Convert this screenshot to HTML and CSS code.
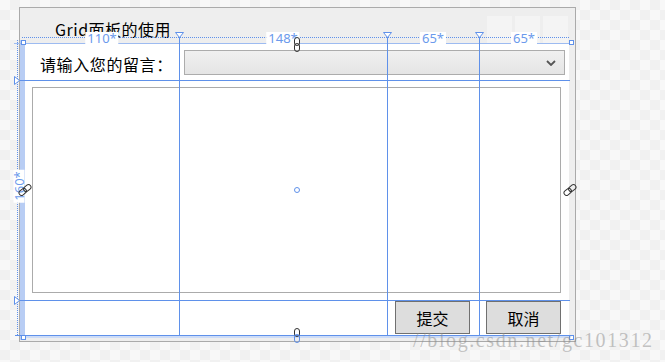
FILE: index.html
```html
<!DOCTYPE html>
<html lang="zh-cn">
<head>
    <meta charset="UTF-8">
    <meta name="viewport" content="width=device-width, initial-scale=1.0">
    <title>Grid面板的使用</title>
    <link rel="stylesheet" href="styles.css">
</head>
<body>
    <div class="stage">
        <div class="window">
            <div class="titlebar">
                <span class="title">Grid面板的使用</span>
                <div class="win-buttons">
                    <span></span><span></span><span></span>
                </div>
            </div>

            <div class="client">
                <div class="msg-label">请输入您的留言：</div>
                <div class="combo">
                    <svg class="chevron" width="10" height="6" viewBox="0 0 10 6"><path d="M1 1 L5 5 L9 1" fill="none" stroke="#555" stroke-width="1.8"/></svg>
                </div>
                <div class="memo"></div>
                <button class="btn btn-submit">提交</button>
                <button class="btn btn-cancel">取消</button>
            </div>

            <!-- designer adorners -->
            <div class="ruler-top"></div>
            <div class="ruler-left"></div>
            <div class="band-left"></div>
            <div class="band-bottom"></div>

            <div class="gline row-line r0"></div>
            <div class="gline row-line r1"></div>
            <div class="gline row-line r2"></div>
            <div class="gline row-line r3"></div>
            <div class="gline col-line c1"></div>
            <div class="gline col-line c2"></div>
            <div class="gline col-line c3"></div>

            <svg class="marker m-c1" width="9" height="6" viewBox="0 0 9 6"><path d="M0.5 0.5 H8.5 L4.5 5.5 Z" fill="#fff" stroke="#5f91ea"/></svg>
            <svg class="marker m-c2" width="9" height="6" viewBox="0 0 9 6"><path d="M0.5 0.5 H8.5 L4.5 5.5 Z" fill="#fff" stroke="#5f91ea"/></svg>
            <svg class="marker m-c3" width="9" height="6" viewBox="0 0 9 6"><path d="M0.5 0.5 H8.5 L4.5 5.5 Z" fill="#fff" stroke="#5f91ea"/></svg>
            <svg class="marker m-r1" width="6" height="9" viewBox="0 0 6 9"><path d="M0.5 0.5 V8.5 L5.5 4.5 Z" fill="#fff" stroke="#5f91ea"/></svg>
            <svg class="marker m-r2" width="6" height="9" viewBox="0 0 6 9"><path d="M0.5 0.5 V8.5 L5.5 4.5 Z" fill="#fff" stroke="#5f91ea"/></svg>

            <span class="corner k-tl"></span>
            <span class="corner k-tr"></span>
            <span class="corner k-bl"></span>
            <span class="corner k-br"></span>

            <span class="col-tag t1">110*</span>
            <span class="col-tag t2">148*</span>
            <span class="col-tag t3">65*</span>
            <span class="col-tag t4">65*</span>
            <span class="row-tag">160*</span>

            <svg class="link l-top" width="6" height="15" viewBox="0 0 6 15"><rect x="0.5" y="0.5" width="5" height="8" rx="2.5" fill="none" stroke="#333"/><rect x="0.5" y="6.5" width="5" height="8" rx="2.5" fill="none" stroke="#333"/></svg>
            <svg class="link l-bottom" width="6" height="15" viewBox="0 0 6 15"><rect x="0.5" y="0.5" width="5" height="8" rx="2.5" fill="none" stroke="#333"/><rect x="0.5" y="6.5" width="5" height="8" rx="2.5" fill="none" stroke="#5b8de6"/></svg>
            <svg class="link l-left" width="16" height="14" viewBox="0 0 16 14"><g transform="rotate(-40 8 7)" fill="none" stroke="#333"><rect x="1" y="4.5" width="8" height="5" rx="2.5"/><rect x="7" y="4.5" width="8" height="5" rx="2.5"/></g></svg>
            <svg class="link l-right" width="16" height="14" viewBox="0 0 16 14"><g transform="rotate(-40 8 7)" fill="none" stroke="#333"><rect x="1" y="4.5" width="8" height="5" rx="2.5"/><rect x="7" y="4.5" width="8" height="5" rx="2.5"/></g></svg>

            <span class="center-dot"></span>
        </div>

        <div class="watermark">//blog.csdn.net/gc101312</div>
    </div>
</body>
</html>
```

FILE: styles.css
```css
:root {
    --guide: #5f91ea;
    --guide-light: #b8cdf4;
    --frame: #eeeeee;
    --frame-border: #aaaaaa;
}

* {
    margin: 0;
    padding: 0;
    box-sizing: border-box;
}

body {
    font-family: "Noto Sans CJK SC", "Noto Sans", sans-serif;
    background-color: #f8f8f8;
    background-image: repeating-conic-gradient(#f1f1f1 0 25%, #f8f8f8 0 50%);
    background-size: 20px 20px;
    color: #000;
}

.stage {
    position: relative;
    width: 665px;
    height: 362px;
    padding: 7px 0 0 19px;
}

.window {
    position: relative;
    width: 557px;
    height: 335px;
    background-color: var(--frame);
    border: 1px solid var(--frame-border);
}

/* title bar */
.titlebar {
    height: 36px;
    display: flex;
    align-items: flex-start;
    padding: 8px 7px 0 35px;
}

.title {
    margin-top: 3px;
    font-size: 16px;
    line-height: 20px;
    letter-spacing: 0.5px;
    font-family: "Noto Sans CJK SC", sans-serif;
}

.win-buttons {
    margin-left: auto;
    display: flex;
    gap: 3px;
}

.win-buttons span {
    width: 25px;
    height: 28px;
    background-color: #f4f4f4;
}

/* window content */
.client {
    margin: 0 5px;
    width: 544px;
    height: 291px;
    background-color: #fff;
    display: grid;
    grid-template-columns: 154px 208px 92px 90px;
    grid-template-rows: 36px 220px 35px;
}

.msg-label {
    grid-column: 1;
    grid-row: 1;
    align-self: center;
    padding-left: 15px;
    margin-top: 3px;
    font-size: 16px;
    line-height: 20px;
    letter-spacing: 0.6px;
    white-space: nowrap;
}

.combo {
    grid-column: 2 / 5;
    grid-row: 1;
    margin: 6px 4px 5px 5px;
    border: 1px solid #acacac;
    background: linear-gradient(#f0f0f0, #e5e5e5);
    display: flex;
    align-items: center;
    justify-content: flex-end;
    padding-right: 8px;
}

.chevron {
    display: block;
}

.memo {
    grid-column: 1 / 5;
    grid-row: 2;
    margin: 7px 8px 7px 7px;
    border: 1px solid #ababab;
    background-color: #fff;
}

.btn {
    grid-row: 3;
    margin: 1px 0;
    width: 75px;
    background-color: #dddddd;
    border: 1px solid #707070;
    font-family: "Noto Sans CJK SC", sans-serif;
    font-size: 16px;
    color: #000;
}

.btn-submit {
    grid-column: 3;
    margin-left: 8px;
}

.btn-cancel {
    grid-column: 4;
    margin-left: 7px;
}

/* designer adorners */
.ruler-top,
.ruler-left,
.band-left,
.band-bottom,
.gline,
.marker,
.corner,
.col-tag,
.row-tag,
.link,
.center-dot {
    position: absolute;
}

.ruler-top {
    left: 2px;
    top: 29px;
    width: 547px;
    border-top: 1px dotted var(--guide);
}

.ruler-left {
    left: -3px;
    top: 32px;
    height: 295px;
    border-left: 1px dotted var(--guide);
}

.band-left {
    left: 0;
    top: 32px;
    width: 5px;
    height: 300px;
    background-color: var(--guide-light);
}

.band-bottom {
    left: 5px;
    top: 328px;
    width: 544px;
    height: 2px;
    background-color: #cddcf7;
}

.gline {
    background-color: var(--guide);
}

.row-line {
    left: -6px;
    width: 556px;
    height: 1px;
}

.r0 { top: 35px; background-color: #9dbbf1; }
.r1 { top: 72px; }
.r2 { top: 292px; }
.r3 { top: 327px; left: -5px; }

.col-line {
    top: 29px;
    width: 1px;
    height: 299px;
}

.c1 { left: 159px; }
.c2 { left: 367px; }
.c3 { left: 459px; }

.m-c1 { left: 155px; top: 24px; }
.m-c2 { left: 363px; top: 24px; }
.m-c3 { left: 455px; top: 24px; }
.m-r1 { left: -6px; top: 68px; }
.m-r2 { left: -6px; top: 288px; }

.corner {
    width: 5px;
    height: 5px;
    border: 1px solid var(--guide);
    background-color: #fff;
}

.k-tl { left: 1px; top: 32px; }
.k-tr { left: 549px; top: 32px; }
.k-bl { left: 1px; top: 327px; }
.k-br { left: 549px; top: 327px; }

.col-tag {
    top: 24px;
    transform: translateX(-50%);
    padding: 0 2px;
    background-color: #fff;
    color: #6b9aec;
    font-family: "Noto Sans", sans-serif;
    font-size: 13px;
    line-height: 12px;
}

.t1 { left: 82px; }
.t2 { left: 263px; }
.t3 { left: 413px; }
.t4 { left: 504px; }

.row-tag {
    left: -1px;
    top: 178px;
    transform: translate(-50%, -50%) rotate(-90deg);
    padding: 0 2px;
    background-color: #fff;
    color: #6b9aec;
    font-family: "Noto Sans", sans-serif;
    font-size: 13px;
    line-height: 11px;
}

.l-top { left: 274px; top: 29px; }
.l-bottom { left: 274px; top: 320px; }
.l-left { left: -3px; top: 175px; }
.l-right { left: 542px; top: 175px; }

.center-dot {
    left: 274px;
    top: 179px;
    width: 6px;
    height: 6px;
    border: 1px solid var(--guide);
    border-radius: 50%;
    background-color: #fff;
}

.watermark {
    position: absolute;
    left: 413px;
    top: 330px;
    font-family: "Liberation Serif", serif;
    font-size: 20px;
    line-height: 20px;
    letter-spacing: 1.6px;
    color: rgba(140, 140, 140, 0.5);
    white-space: nowrap;
}
```
